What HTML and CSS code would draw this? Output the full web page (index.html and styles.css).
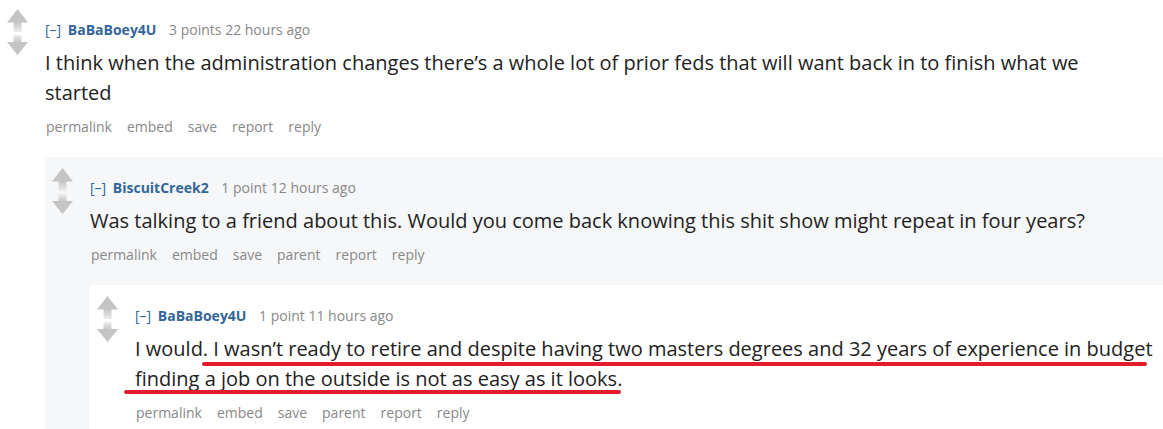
FILE: index.html
```html
<!DOCTYPE html>
<html lang="en">
<head>
  <meta charset="UTF-8">
  <title>Comments</title>
  <link rel="stylesheet" href="styles.css">
</head>
<body>

  <svg class="defs" width="0" height="0" aria-hidden="true">
    <defs>
      <linearGradient id="stemUp" x1="0" y1="0" x2="0" y2="1">
        <stop offset="0" stop-color="#c4c4c4"/>
        <stop offset="1" stop-color="#ededed"/>
      </linearGradient>
      <linearGradient id="stemDown" x1="0" y1="0" x2="0" y2="1">
        <stop offset="0" stop-color="#ededed"/>
        <stop offset="1" stop-color="#c4c4c4"/>
      </linearGradient>
      <symbol id="arrows" viewBox="0 0 21 46">
        <polygon points="10.5,0 21,13.5 0,13.5" fill="#c4c4c4"/>
        <rect x="6.5" y="13" width="8" height="10" fill="url(#stemUp)"/>
        <rect x="6.5" y="26" width="8" height="7.5" fill="url(#stemDown)"/>
        <polygon points="0,33 21,33 10.5,46" fill="#c4c4c4"/>
      </symbol>
    </defs>
  </svg>

  <div class="comment">
    <div class="votes"><svg class="arrow"><use href="#arrows"/></svg></div>
    <div class="entry">
      <p class="tagline">
        <a class="expand" href="#">[–]</a>
        <a class="author" href="#">BaBaBoey4U</a>
        <span class="score">3 points</span> <time>22 hours ago</time>
      </p>
      <div class="md">
        <p>I think when the administration changes there’s a whole lot of prior feds that will want back in to finish what we started</p>
      </div>
      <ul class="buttons">
        <li><a href="#">permalink</a></li>
        <li><a href="#">embed</a></li>
        <li><a href="#">save</a></li>
        <li><a href="#">report</a></li>
        <li><a href="#">reply</a></li>
      </ul>

      <div class="child">
        <div class="comment even">
          <div class="votes"><svg class="arrow"><use href="#arrows"/></svg></div>
          <div class="entry">
            <p class="tagline">
              <a class="expand" href="#">[–]</a>
              <a class="author" href="#">BiscuitCreek2</a>
              <span class="score">1 point</span> <time>12 hours ago</time>
            </p>
            <div class="md">
              <p>Was talking to a friend about this. Would you come back knowing this shit show might repeat in four years?</p>
            </div>
            <ul class="buttons">
              <li><a href="#">permalink</a></li>
              <li><a href="#">embed</a></li>
              <li><a href="#">save</a></li>
              <li><a href="#">parent</a></li>
              <li><a href="#">report</a></li>
              <li><a href="#">reply</a></li>
            </ul>

            <div class="child">
              <div class="comment odd">
                <div class="votes"><svg class="arrow"><use href="#arrows"/></svg></div>
                <div class="entry">
                  <p class="tagline">
                    <a class="expand" href="#">[–]</a>
                    <a class="author" href="#">BaBaBoey4U</a>
                    <span class="score">1 point</span> <time>11 hours ago</time>
                  </p>
                  <div class="md marked">
                    <p>I would. I wasn’t ready to retire and despite having two masters degrees and 32 years of experience in budget finding a job on the outside is not as easy as it looks.</p>
                    <span class="ink ink-1"></span>
                    <span class="ink ink-2"></span>
                  </div>
                  <ul class="buttons">
                    <li><a href="#">permalink</a></li>
                    <li><a href="#">embed</a></li>
                    <li><a href="#">save</a></li>
                    <li><a href="#">parent</a></li>
                    <li><a href="#">report</a></li>
                    <li><a href="#">reply</a></li>
                  </ul>
                </div>
              </div>
            </div>

          </div>
        </div>
      </div>

    </div>
  </div>

</body>
</html>
```
FILE: styles.css
```css
:root {
  --link: #336699;
  --muted: #888888;
  --text: #222222;
  --nested-bg: #f6f7f8;
  --ink: #e11d2b;
  --font-main: 'Open Sans', 'Noto Sans', sans-serif;
}

body {
  margin: 0;
  background: #ffffff;
  font-family: var(--font-main);
  color: var(--text);
  overflow: hidden;
}

.defs {
  position: absolute;
  width: 0;
  height: 0;
}

a {
  text-decoration: none;
}

.comment {
  display: grid;
  grid-template-columns: 45px 1fr;
}

.comment.even {
  background: var(--nested-bg);
}

.comment.odd {
  background: #ffffff;
  padding-bottom: 24px;
}

.votes {
  padding: 9px 0 0 7px;
}

.child .votes {
  padding-top: 11px;
}

.arrow {
  display: block;
  width: 21px;
  height: 46px;
}

.entry {
  padding-top: 20px;
  min-width: 0;
}

.child .entry {
  padding-top: 21px;
}

.tagline {
  margin: 0;
  font-size: 14px;
  line-height: 20px;
  color: var(--muted);
  white-space: nowrap;
}

.tagline .expand {
  color: var(--link);
  margin-right: 3px;
}

.tagline .author {
  color: var(--link);
  font-weight: bold;
  margin-right: 9px;
}

.md {
  margin-top: 8px;
  max-width: 1060px;
  font-size: 20px;
  line-height: 30px;
}

.md p {
  margin: 0;
}

.md.marked {
  position: relative;
}

/* red pen underline drawn over the reply */
.ink {
  position: absolute;
  height: 4px;
  border-radius: 2px;
  background: var(--ink);
}

.ink-1 {
  left: 67px;
  top: 28px;
  width: 945px;
}

.ink-2 {
  left: -11px;
  top: 56px;
  width: 497px;
}

.buttons {
  display: flex;
  gap: 15px;
  list-style: none;
  margin: 9px 0 0;
  padding: 0 0 0 1px;
  font-size: 14px;
  line-height: 20px;
}

.buttons a {
  color: var(--muted);
}

.child {
  margin-top: 20px;
}
```
